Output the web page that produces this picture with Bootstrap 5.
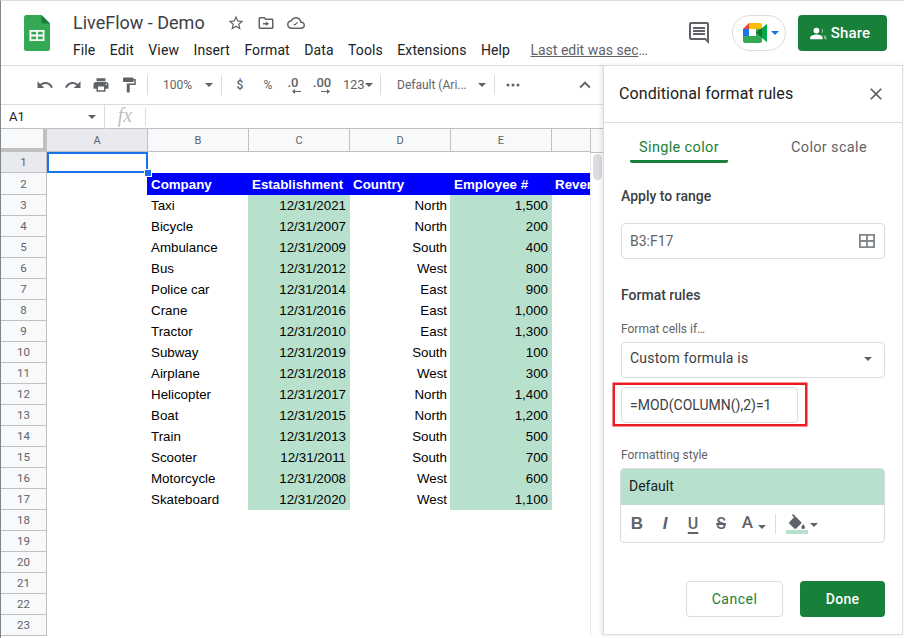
<!DOCTYPE html>
<html lang="en">
<head>
<meta charset="utf-8">
<title>LiveFlow - Demo</title>
<link href="https://cdn.jsdelivr.net/npm/bootstrap@5.3.0/dist/css/bootstrap.min.css" rel="stylesheet">
<style>
html,body{height:100%;overflow:hidden}
body{font-family:Roboto,sans-serif;color:#3c4043;background:#fff;border-top:1px solid #dadce0;border-left:1px solid #80868b;width:904px;height:638px}
svg{display:block;fill:#5f6368}
.app{height:637px}
.top{height:65px;border-bottom:1px solid #dadce0;flex:none}
.logo{margin-left:23px;width:26px;margin-top:14px;height:36px;flex:none}
.titles{margin-left:23px;width:589px;flex:none}
.doc-title{font-size:18px;line-height:24px;margin-top:10px;color:#3c4043;width:135px}
.title-ic{margin-left:12px;margin-top:10px}
.title-ic.first{margin-left:19px}
.menu{font-size:14px;line-height:20px;margin-top:5px;color:#202124;letter-spacing:.1px}
.menu>span{margin-right:14.450px}
.menu>span.edit{margin-left:6px;margin-right:0;color:#5f6368;white-space:nowrap;letter-spacing:0}
.edit u{text-decoration-color:#5f6368}
.cmt{margin-left:27px;margin-top:20px;width:20px;height:24px;flex:none}
.meet{margin-left:23px;margin-top:14px;width:54px;height:36px;border:1px solid #dadce0;border-radius:18px;flex:none;padding-left:10px}
.btn-share{margin-left:12px;margin-top:14px;width:89px;height:36px;background:#188038;color:#fff;font-weight:500;font-size:15px;letter-spacing:.2px;border:0;border-radius:4px;padding:0 5px 0 0;flex:none;gap:4px}
.btn-share:hover{background:#188038;color:#fff}
.caret{width:0;height:0;border-left:4.500px solid transparent;border-right:4.500px solid transparent;border-top:4.500px solid #5f6368;flex:none}
.caret.s{border-left-width:4px;border-right-width:4px;border-top-width:4px}
.main{height:571px}
.left{width:602px;flex:none;min-width:0}
.toolbar{height:39px;border-bottom:1px solid #dadce0;padding-left:30px;font-size:12px;color:#5f6368;flex:none}
.tb{width:28px;height:28px;flex:none}
.num{line-height:13px;font-weight:500;font-size:13px}
.sep{width:1px;height:20px;background:#dadce0;flex:none}
.fbar{height:24px;border-bottom:1px solid #c0c0c0;font-size:13px;color:#202124;flex:none}
.namebox{width:104px;height:24px;padding:0 8px;border-right:1px solid #dadce0;flex:none}
.fx{width:41px;text-align:center;font:italic 20px "Liberation Serif",serif;color:#bdc1c6;line-height:22px;border-right:1px solid #dadce0;height:18px;flex:none}
.fx span{display:block;margin-top:-4px}
.sheetwrap{height:507px;min-height:0}
.viewport{width:589px;overflow:hidden;flex:none}
table.grid{table-layout:fixed;border-collapse:separate;border-spacing:0;width:650px;font:13.330px "Liberation Sans",Arial,sans-serif;color:#000}
.grid th.ch{height:23px;background:#f8f9fa;border-right:1px solid #c0c0c0;border-bottom:1px solid #c0c0c0;font:400 11px Roboto,sans-serif;color:#5f6368;text-align:center;padding:0}
.grid th.ch.on{background:#e8eaed}
.grid th.corner{background:#f8f9fa;border-right:4px solid #c0c0c0;border-bottom:4px solid #c0c0c0}
.grid th.rh{height:21px;background:#f8f9fa;border-right:1px solid #c0c0c0;border-bottom:1px solid #c0c0c0;font:400 11.500px Roboto,sans-serif;color:#5f6368;text-align:center;padding:0}
.grid th.rh.on{background:#e8eaed}
.grid td{height:21px;padding:0 4px 0 3px;white-space:nowrap;overflow:hidden;line-height:20px}
.grid td.hd{background:#00f;color:#fff;font-weight:700;padding-top:2px}
.grid td.hd.f{box-shadow:-1px 0 0 #00f}
.grid td.g{background:#b7e1cd;text-align:right;box-shadow:-1px 0 0 #b7e1cd}
.grid td.r{text-align:right}
.grid td.sel{position:relative;overflow:visible}
.selbox{position:absolute;left:0;top:0;border:2px solid #1a73e8;height:21px;width:101px}
.selh{position:absolute;right:-3px;bottom:-3px;width:6px;height:6px;background:#1a73e8;outline:1px solid #fff;z-index:2}
.scroll{width:13px;flex:none}
.scroll .h{height:24px;background:#f8f9fa;border-bottom:1px solid #c0c0c0;border-left:1px solid #c0c0c0}
.scroll .t{border-left:1px solid #e8eaed;height:483px;padding:1px 1px 0 2px}
.thumb{height:26px;width:9px;background:#dadce0;border-radius:5px}
.panel{width:300px;flex:none;border:1px solid #dadce0;height:570px;box-shadow:-2px 0 4px rgba(60,64,67,.12);margin-top:-1px;background:#fff;position:relative;z-index:3}
.p-head{height:57px;border-bottom:1px solid #dadce0;padding:0 16px 0 15px;font-size:16px;color:#202124;letter-spacing:.1px}
.tabs{padding:0 0 0 26px;margin-top:9px;font-size:14.500px;letter-spacing:.35px}
.tab{width:98px;height:31px;text-align:center;line-height:32px;color:#188038;border-bottom:3px solid #188038;border-radius:0 0 2px 2px}
.tab.off{margin-left:52px;color:#5f6368;border:0}
.p-body{padding:0 17px}
.lab{font-size:14px;font-weight:500;color:#3c4043;line-height:20px}
.sm{font-size:12px;color:#5f6368;line-height:16px}
.fld{height:36px;border:1px solid #dadce0;border-radius:4px;background:#fff;font-size:14px;color:#3c4043;padding:0 8px;box-shadow:none}
.form-control.fld{padding:0 8px;font-family:Roboto,sans-serif;color:#3c4043}
.redbox{border:2px solid #ed1c24;box-shadow:0 0 0 .5px #ed1c24;width:194px;height:43px;margin:5px 0 0 -8px;padding:0 0 0 6px;display:flex;align-items:center}
.redbox .fld{width:177px;flex:none}
.stylebox{margin-left:-1px;width:265px;height:75px;border:1px solid #dadce0;border-radius:4px;overflow:hidden}
.preview{height:36px;background:#b7e1cd;color:#202124;font-size:14px;padding:0 8px;line-height:35px}
.st{height:38px;padding-left:2px;color:#5f6368;font-weight:700}
.st .x{width:28px;text-align:center;font-size:17px;line-height:20px;flex:none}
.st .u{text-decoration:underline;text-decoration-thickness:2px;text-underline-offset:3px;font-weight:500;font-size:16px}
.st .v{text-decoration:line-through;text-decoration-thickness:2px;font-weight:500;font-size:16px}
.st .a{font-weight:500;font-size:17px;width:34px;gap:5px;margin-left:2px}
.foot{margin-top:38px}
.btn-c{width:97px;height:36px;border:1px solid #dadce0;border-radius:4px;color:#188038;background:#fff;font-size:14px;font-weight:400;letter-spacing:.5px;padding:0}
.btn-d{width:85px;height:36px;border:0;border-radius:4px;background:#188038;color:#fff;font-size:14px;font-weight:500;letter-spacing:.25px;padding:0;margin-left:17px}
.btn-c:hover{color:#188038;background:#fff;border-color:#dadce0}
.btn-d:hover{background:#188038;color:#fff}
</style>
</head>
<body>
<div class="app d-flex flex-column">
  <header class="top d-flex">
    <svg class="logo" viewBox="0 0 26 36"><path d="M2 0h15.500L26 8.500V33.500A2.500 2.500 0 0 1 23.500 36H2.500A2.500 2.500 0 0 1 0 33.500V2.500A2.500 2.500 0 0 1 2 0z" fill="#34a853"/><path d="M17.500 0L26 8.500h-6.500a2 2 0 0 1-2-2z" fill="#188038"/><path d="M5.500 15h15v11h-15zM7.300 16.800v2.800h4.800v-2.800zM13.900 16.800v2.800h4.800v-2.800zM7.300 21.400v2.800h4.800v-2.800zM13.900 21.400v2.800h4.800v-2.800z" fill="#fff" fill-rule="evenodd"/></svg>
    <div class="titles">
      <div class="d-flex align-items-center doc-row">
        <div class="doc-title text-nowrap">LiveFlow - Demo</div>
        <svg class="title-ic first" width="18" height="18" viewBox="0 0 24 24"><path d="M22 9.240l-7.190-.620L12 2 9.190 8.630 2 9.240l5.460 4.730L5.820 21 12 17.270 18.180 21l-1.630-7.030L22 9.240zM12 15.400l-3.760 2.270 1-4.280-3.320-2.880 4.380-.38L12 6.100l1.710 4.040 4.380.38-3.320 2.880 1 4.280L12 15.400z"/></svg>
        <svg class="title-ic" width="18" height="18" viewBox="0 0 24 24"><path d="M20 6h-8l-2-2H4c-1.100 0-2 .9-2 2v12c0 1.100.9 2 2 2h16c1.100 0 2-.9 2-2V8c0-1.100-.9-2-2-2zm0 12H4V6h5.170l2 2H20v10zm-8-4H8v-2h4v-2l4 3-4 3z"/></svg>
        <svg class="title-ic" width="18" height="18" viewBox="0 0 24 24"><path d="M19.350 10.040C18.670 6.590 15.640 4 12 4 9.110 4 6.600 5.640 5.350 8.040 2.340 8.360 0 10.910 0 14c0 3.310 2.690 6 6 6h13c2.760 0 5-2.240 5-5 0-2.640-2.050-4.780-4.650-4.960zM19 18H6c-2.210 0-4-1.790-4-4s1.790-4 4-4h.71C7.370 7.690 9.480 6 12 6c3.040 0 5.500 2.460 5.500 5.500v.5H19c1.660 0 3 1.340 3 3s-1.340 3-3 3zm-8.600-2.500l-2-2 1-1 1 1 3.200-3 1 1z"/></svg>
      </div>
      <div class="menu d-flex text-nowrap">
        <span>File</span><span>Edit</span><span>View</span><span>Insert</span><span>Format</span><span>Data</span><span>Tools</span><span>Extensions</span><span>Help</span><span class="edit"><u>Last edit was sec</u>…</span>
      </div>
    </div>
    <svg class="cmt" viewBox="0 0 20 22"><path d="M19.990 2C19.990.9 19.100 0 18 0H2C.9 0 0 .9 0 2v14c0 1.100.9 2 2 2h14l4 4-.01-20zM18 2v15.170L16.830 16H2V2h16zM4 11h12v2H4zm0-3h12v2H4zm0-3h12v2H4z"/></svg>
    <div class="meet d-flex align-items-center">
      <svg width="24" height="20" viewBox="0 0 24 20"><path d="M0 6h6v7H0z" fill="#1a73e8"/><path d="M6 0L0 6h6z" fill="#ea4335"/><path d="M6 0h11a2 2 0 0 1 2 2v4H6z" fill="#fbbc04"/><path d="M0 13h19v5a2 2 0 0 1-2 2H2a2 2 0 0 1-2-2z" fill="#34a853"/><path d="M13 6h6v7h-6z" fill="#34a853"/><path d="M13 9.500L19 5v10z" fill="#137333"/><path d="M19 5l4-3.500a.5.5 0 0 1 1 .5v16a.5.5 0 0 1-1 .5L19 15z" fill="#00ac47"/><path d="M6 6h7v7H6z" fill="#fff"/></svg>
      <span class="caret s" style="margin-left:4px;border-top-color:#1a73e8"></span>
    </div>
    <button class="btn btn-share d-flex align-items-center justify-content-center" type="button">
      <svg width="17" height="15" viewBox="0 0 20 18" style="fill:#fff"><path d="M13 2.500a3.300 3.300 0 0 1 0 6.400 5 5 0 0 0 0-6.400zM14.500 10.500c2.500.5 5 1.500 5 3.500v2h-2.500v-2c0-1.500-1-2.700-2.500-3.500z" opacity=".55"/><circle cx="7.500" cy="5.500" r="3.500"/><path d="M0 16v-2c0-2.400 4.800-3.800 7.500-3.800s7.500 1.400 7.500 3.800v2z"/></svg>
      Share
    </button>
  </header>
  <div class="main d-flex">
    <div class="left d-flex flex-column">
      <div class="toolbar d-flex align-items-center">
        <span class="tb d-flex align-items-center justify-content-center"><svg width="18" height="18" viewBox="0 0 24 24"><path d="M12.500 8c-2.650 0-5.050.99-6.900 2.600L2 7v9h9l-3.620-3.620c1.390-1.160 3.160-1.880 5.120-1.880 3.540 0 6.550 2.310 7.600 5.500l2.370-.78C21.080 11.030 17.150 8 12.500 8z"/></svg></span>
        <span class="tb d-flex align-items-center justify-content-center"><svg width="18" height="18" viewBox="0 0 24 24"><path d="M18.400 10.600C16.550 8.990 14.150 8 11.500 8c-4.650 0-8.580 3.030-9.960 7.220L3.900 16c1.050-3.190 4.050-5.500 7.600-5.500 1.950 0 3.730.72 5.120 1.880L13 16h9V7l-3.600 3.600z"/></svg></span>
        <span class="tb d-flex align-items-center justify-content-center"><svg width="18" height="18" viewBox="0 0 24 24"><path d="M19 8H5c-1.660 0-3 1.340-3 3v6h4v4h12v-4h4v-6c0-1.660-1.340-3-3-3zm-3 11H8v-5h8v5zm3-7c-.55 0-1-.45-1-1s.45-1 1-1 1 .45 1 1-.45 1-1 1zm-1-9H6v4h12V3z"/></svg></span>
        <span class="tb d-flex align-items-center justify-content-center"><svg width="18" height="18" viewBox="0 0 24 24"><path d="M18 4V3c0-.55-.45-1-1-1H5c-.55 0-1 .45-1 1v4c0 .55.45 1 1 1h12c.55 0 1-.45 1-1V6h1v4H9v11c0 .55.45 1 1 1h2c.55 0 1-.45 1-1v-9h8V4h-3z"/></svg></span>
        <span class="sep ms-1"></span>
        <span class="d-flex align-items-center" style="width:73px;padding-left:15px;flex:none"><span style="width:41px">100%</span><span class="caret" style="margin-left:1px"></span></span>
        <span class="sep"></span>
        <span class="tb d-flex align-items-center justify-content-center" style="margin-left:4px;font-weight:500">$</span>
        <span class="tb d-flex align-items-center justify-content-center">%</span>
        <span class="tb num d-flex flex-column align-items-center justify-content-center" style="margin-left:-3px"><span>.0</span><svg width="9" height="5" viewBox="0 0 9 5" style="margin-left:6px"><path d="M0 2.500L3 0v2h6v1H3v2z"/></svg></span>
        <span class="tb num d-flex flex-column align-items-center justify-content-center" style="width:32px;margin-left:-1px"><span>.00</span><svg width="9" height="5" viewBox="0 0 9 5" style="margin-left:6px"><path d="M9 2.500L6 0v2H0v1h6v2z"/></svg></span>
        <span class="d-flex align-items-center" style="width:38px;padding-left:1px;margin-left:4px;flex:none;font-size:13px;letter-spacing:-.2px">123<span class="caret s" style="margin-left:1px"></span></span>
        <span class="sep"></span>
        <span class="d-flex align-items-center" style="width:113px;padding-left:16px;flex:none;white-space:nowrap"><span style="width:81px">Default (Ari...</span><span class="caret"></span></span>
        <span class="sep"></span>
        <span class="d-flex align-items-center justify-content-center" style="width:35px;flex:none"><svg width="14" height="4" viewBox="0 0 14 4"><circle cx="2" cy="2" r="1.500"/><circle cx="7" cy="2" r="1.500"/><circle cx="12" cy="2" r="1.500"/></svg></span>
        <span class="d-flex align-items-center" style="margin-left:44px"><svg width="22" height="22" viewBox="0 0 24 24"><path d="M12 8l-6 6 1.410 1.410L12 10.830l4.590 4.580L18 14z"/></svg></span>
      </div>
      <div class="fbar d-flex align-items-center">
        <div class="namebox d-flex align-items-center justify-content-between">A1<span class="caret"></span></div>
        <div class="fx"><span>fx</span></div>
      </div>
      <div class="sheetwrap d-flex">
        <div class="viewport">
          <table class="grid" id="g"></table>
        </div>
        <div class="scroll"><div class="h"></div><div class="t"><div class="thumb"></div></div></div>
      </div>
    </div>
    <aside class="panel d-flex flex-column">
      <div class="p-head d-flex align-items-center justify-content-between"><span>Conditional format rules</span><svg width="20" height="20" viewBox="0 0 24 24"><path d="M19 6.410L17.590 5 12 10.590 6.410 5 5 6.410 10.590 12 5 17.590 6.410 19 12 13.410 17.590 19 19 17.590 13.410 12z"/></svg></div>
      <div class="tabs d-flex"><div class="tab">Single color</div><div class="tab off">Color scale</div></div>
      <div class="p-body">
        <div class="lab" style="margin-top:23px">Apply to range</div>
        <div class="d-flex align-items-center justify-content-between fld" style="margin-top:17px;padding-right:9px"><span style="color:#5f6368">B3:F17</span><svg width="16" height="14" viewBox="0 0 16 14" style="fill:#80868b"><path d="M0 0h16v14H0zM1.800 1.800v4.300h5.300V1.800zM8.900 1.800v4.300h5.300V1.800zM1.800 7.900v4.300h5.300V7.900zM8.900 7.900v4.300h5.300V7.900z" fill-rule="evenodd"/></svg></div>
        <div class="lab" style="margin-top:26px">Format rules</div>
        <div class="sm" style="margin-top:16px">Format cells if…</div>
        <div class="d-flex align-items-center justify-content-between fld" style="margin-top:5px;padding-right:12px;padding-bottom:3px;letter-spacing:.2px"><span>Custom formula is</span><span class="caret"></span></div>
        <div class="redbox"><input class="form-control fld" type="text" value="=MOD(COLUMN(),2)=1" aria-label="Custom formula"></div>
        <div class="sm" style="margin-top:21px">Formatting style</div>
        <div class="stylebox" style="margin-top:5px">
          <div class="preview">Default</div>
          <div class="st d-flex align-items-center">
            <span class="x" style="font-family:'Liberation Sans',sans-serif">B</span>
            <span class="x" style="font-family:'Liberation Sans',sans-serif;font-style:italic">I</span>
            <span class="x u">U</span>
            <span class="x v">S</span>
            <span class="x a d-flex align-items-center justify-content-center"><span style="margin-top:-4px">A</span><span class="caret s" style="margin-top:6px"></span></span>
            <span class="sep" style="margin-left:4px"></span>
            <span class="d-flex" style="margin-left:10px"><span><svg width="22" height="15" viewBox="0 0 24 17"><path d="M16.560 8.940L7.620 0 6.210 1.410l2.380 2.380-5.150 5.150c-.59.59-.59 1.540 0 2.120l5.500 5.500c.29.29.68.44 1.060.44s.77-.15 1.060-.44l5.500-5.500c.59-.58.59-1.530 0-2.120zM19 11.500s-2 2.170-2 3.500c0 1.100.9 2 2 2s2-.9 2-2c0-1.330-2-3.500-2-3.500z"/></svg><span class="d-block" style="height:4px;background:#b7e1cd;margin-top:1px"></span></span><span class="caret s" style="margin:9px 0 0 2px"></span></span>
          </div>
        </div>
        <div class="foot d-flex justify-content-end"><button class="btn btn-c" type="button">Cancel</button><button class="btn btn-d" type="button">Done</button></div>
      </div>
    </aside>
  </div>
</div>
<script>
var d=[["Taxi","12/31/2021","North","1,500"],["Bicycle","12/31/2007","North","200"],["Ambulance","12/31/2009","South","400"],["Bus","12/31/2012","West","800"],["Police car","12/31/2014","East","900"],["Crane","12/31/2016","East","1,000"],["Tractor","12/31/2010","East","1,300"],["Subway","12/31/2019","South","100"],["Airplane","12/31/2018","West","300"],["Helicopter","12/31/2017","North","1,400"],["Boat","12/31/2015","North","1,200"],["Train","12/31/2013","South","500"],["Scooter","12/31/2011","South","700"],["Motorcycle","12/31/2008","West","600"],["Skateboard","12/31/2020","West","1,100"]];
var h='<colgroup><col style="width:46px"><col style="width:101px"><col style="width:101px"><col style="width:101px"><col style="width:101px"><col style="width:101px"><col style="width:99px"></colgroup>';
h+='<tr><th class="ch corner"></th><th class="ch on">A</th><th class="ch">B</th><th class="ch">C</th><th class="ch">D</th><th class="ch">E</th><th class="ch"></th></tr>';
for(var r=1;r<=23;r++){
  h+='<tr><th class="rh'+(r==1?' on':'')+'">'+r+'</th>';
  if(r==1)h+='<td class="sel"><div class="selbox"></div><div class="selh"></div></td><td colspan="5"></td>';
  else if(r==2)h+='<td></td><td class="hd f">Company</td><td class="hd">Establishment</td><td class="hd">Country</td><td class="hd">Employee #</td><td class="hd">Revenue</td>';
  else if(r<=17){var x=d[r-3];h+='<td></td><td>'+x[0]+'</td><td class="g">'+x[1]+'</td><td class="r">'+x[2]+'</td><td class="g">'+x[3]+'</td><td></td>';}
  else h+='<td colspan="6"></td>';
  h+='</tr>';
}
document.getElementById('g').innerHTML=h;
</script>
<script src="https://cdn.jsdelivr.net/npm/bootstrap@5.3.0/dist/js/bootstrap.bundle.min.js"></script>
</body>
</html>
